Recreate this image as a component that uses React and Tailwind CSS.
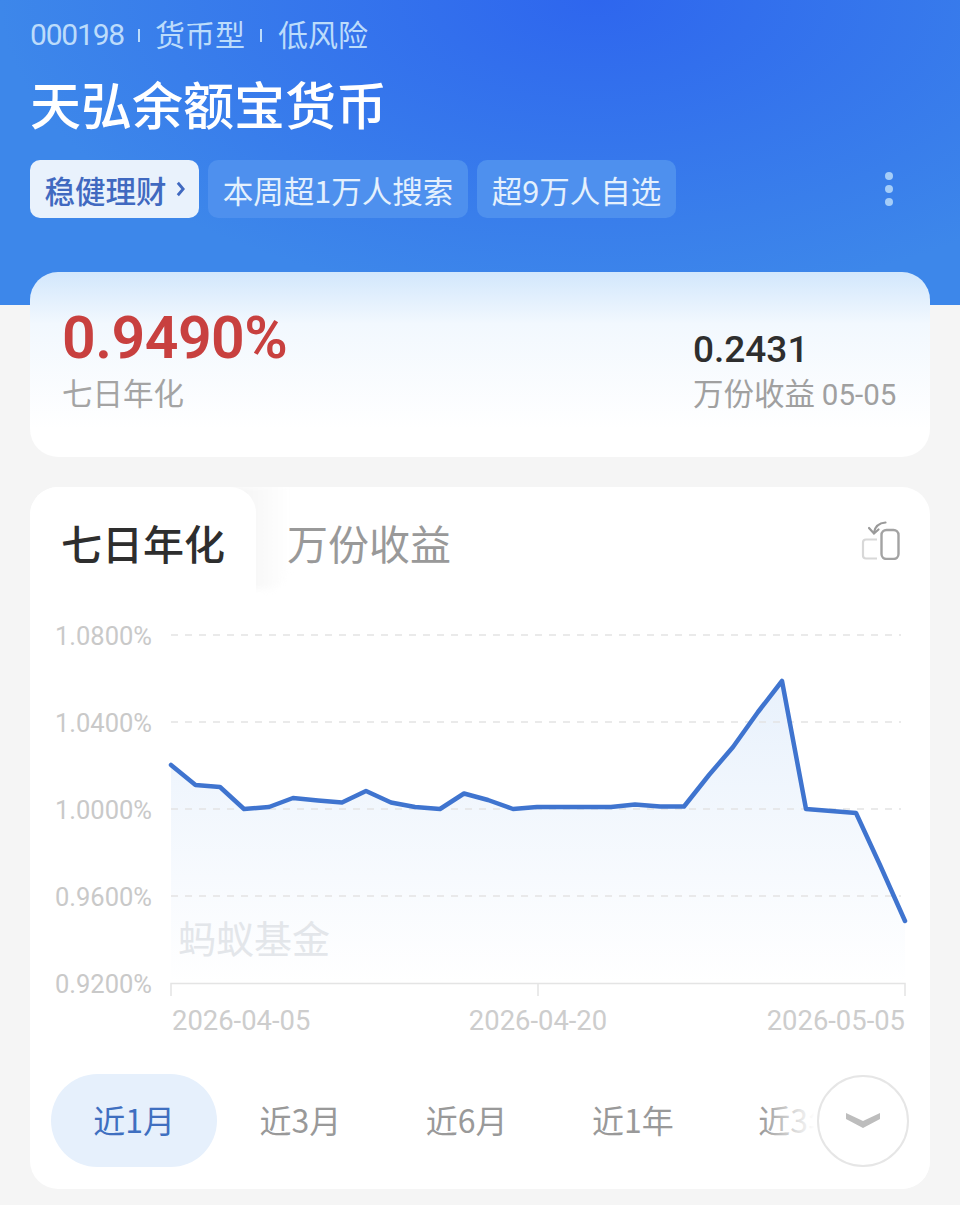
import { useState } from "react";

const cjk = "font-['Noto_Sans_CJK_SC','Noto_Sans',sans-serif]";
const ranges = ["近1月", "近3月", "近6月", "近1年", "近3年"];
const yLabels = [
  ["1.0800%", 635],
  ["1.0400%", 722],
  ["1.0000%", 809],
  ["0.9600%", 896],
  ["0.9200%", 983],
];
const xLabels = [
  ["2026-04-05", 172, "start"],
  ["2026-04-20", 538, "middle"],
  ["2026-05-05", 905, "end"],
];
const points = [
  [171, 765], [195.5, 785], [220, 787], [244, 809], [269, 807], [293, 798],
  [318, 800.5], [342, 802.5], [366, 791], [391, 802.5], [415, 807], [440, 809],
  [464, 793.5], [488, 800], [513, 809], [537, 807], [562, 807], [586, 807],
  [611, 807], [635, 804.5], [660, 806.5], [684, 806.5], [709, 775], [733, 747],
  [758, 712], [782, 681], [806, 809], [831, 811], [856, 813], [880, 865], [905, 921],
];
const linePath = points.map(([x, y]) => `${x},${y}`).join(" ");
const areaPath = `171,983 ${linePath} 905,983`;

const Chart = () => (
  <svg viewBox="0 610 960 440" className="absolute left-[-30px] top-[123px] h-[440px] w-[960px]">
    <defs>
      <linearGradient id="area" x1="0" y1="0" x2="0" y2="1">
        <stop offset="0" stopColor="#e8f1fc" />
        <stop offset="1" stopColor="#ffffff" />
      </linearGradient>
    </defs>
    <polygon points={areaPath} fill="url(#area)" />
    {yLabels.map(([label, y]) => (
      <g key={label}>
        {y !== 983 && <line x1="171" x2="901" y1={y} y2={y} stroke="#e4e4e4" strokeWidth="1.5" strokeDasharray="7 7" />}
        <text x="152" y={y + 10} textAnchor="end" fontSize="25.500" fill="#c9c9c9" fontFamily="Roboto, sans-serif">{label}</text>
      </g>
    ))}
    <path d="M171 996V983.5H905V996M538 983.5V996" fill="none" stroke="#e4e4e4" strokeWidth="1.5" />
    {xLabels.map(([label, x, anchor]) => (
      <text key={label} x={x} y="1030" textAnchor={anchor} fontSize="27.400" fill="#cdcdcd" fontFamily="Roboto, sans-serif">{label}</text>
    ))}
    <text x="178" y="953" fontSize="38" fill="#e3e6ea" fontFamily="'Noto Sans CJK SC', sans-serif">蚂蚁基金</text>
    <polyline points={linePath} fill="none" stroke="#3f74cf" strokeWidth="4.500" strokeLinejoin="round" strokeLinecap="round" />
  </svg>
);

const RotateIcon = () => (
  <svg viewBox="0 0 40 40" className="h-10 w-10" fill="none">
    <path d="M16 19.500H5a3 3 0 0 0-3 3v13a3 3 0 0 0 3 3h11" stroke="#d8d8d8" strokeWidth="2.200" />
    <rect x="20.500" y="10" width="17" height="29" rx="5" stroke="#a3a3a3" strokeWidth="2.400" />
    <path d="M24.500 2.500c-6 .5-10.500 4-11.500 10" stroke="#9a9a9a" strokeWidth="2.200" strokeLinecap="round" />
    <path d="M8 8l5 5.500 4.500-4" stroke="#9a9a9a" strokeWidth="2.200" strokeLinecap="round" />
  </svg>
);

export default function App() {
  const [active] = useState(0);

  return (
    <div className={`relative h-[1205px] w-[960px] overflow-hidden bg-[#f5f5f5] ${cjk}`}>
      <header className="h-[305px] bg-[radial-gradient(ellipse_62%_100%_at_62%_0%,#2e66ee_0%,#3d87ea_100%)] px-[30px] pt-[17px]">
        <div className="flex h-[36px] items-center text-[30px] leading-none text-[#bcdcfb]">
          <span className="font-['Roboto'] text-[30px] tracking-[-1.200px]">000198</span>
          <span className="ml-[14px] mr-[15px] h-[13px] w-[2px] bg-[#bcdcfb]" />
          <span className="mb-[4px]">货币型</span>
          <span className="ml-[15px] mr-[16px] h-[13px] w-[2px] bg-[#bcdcfb]" />
          <span className="mb-[4px]">低风险</span>
        </div>
        <h1 className="mt-[20px] text-[51px] font-medium leading-[60px] text-white">天弘余额宝货币</h1>
        <div className="mt-[27px] flex items-center gap-[9px]">
          <div className="flex h-[58px] w-[169px] items-center justify-center gap-[9px] rounded-[10px] bg-[#e9f2fc] pt-[3px] text-[30.500px] font-medium text-[#4069c0]">
            稳健理财
            <svg viewBox="0 0 10 18" className="mb-[3px] h-[16px] w-[9px]" fill="none">
              <path d="M2 2l6 7-6 7" stroke="#4069c0" strokeWidth="3.200" />
            </svg>
          </div>
          <div className="flex h-[58px] w-[260px] items-center justify-center rounded-[10px] bg-[#4e90ee] pt-[3px] text-[30.500px] text-[#e4f0fd]">本周超1万人搜索</div>
          <div className="flex h-[58px] w-[199px] items-center justify-center rounded-[10px] bg-[#4e90ee] pt-[3px] text-[30.500px] text-[#e4f0fd]">超9万人自选</div>
          <div className="ml-auto mr-[37px] flex flex-col gap-[5px]">
            <span className="h-2 w-2 rounded-full bg-[#a5cdf8]" />
            <span className="h-2 w-2 rounded-full bg-[#a5cdf8]" />
            <span className="h-2 w-2 rounded-full bg-[#a5cdf8]" />
          </div>
        </div>
      </header>

      <section className="mx-[30px] mt-[-33px] flex h-[185px] items-start justify-between rounded-[28px] bg-[linear-gradient(180deg,#d2e7fc_0%,#f2f8fe_28%,#ffffff_85%)] pl-[32px] pr-[32px] pt-[36px]">
        <div>
          <div className="font-['Roboto'] text-[59px] font-semibold leading-[60px] tracking-[-0.500px] text-[#c8403f]">0.9490%</div>
          <div className="mt-[4px] text-[30.500px] leading-[40px] text-[#a4a4a4]">七日年化</div>
        </div>
        <div className="mt-[20px] w-[205px]">
          <div className="font-['Roboto'] text-[37px] font-medium leading-[44px] text-[#2e2e2e]">0.2431</div>
          <div className="mt-[2px] text-[30.500px] leading-[36px] text-[#a0a0a0]">万份收益 <span className="font-['Roboto'] text-[29.500px]">05-05</span></div>
        </div>
      </section>

      <section className="relative mx-[30px] mt-[30px] h-[702px] overflow-hidden rounded-[28px] bg-white">
        <div className="absolute left-[196px] top-0 h-[102px] w-[64px] rounded-br-[24px] bg-gradient-to-r from-[#f2f2f2] to-white blur-[3px]" />
        <div className="relative flex h-[116px] items-start">
          <div className="flex h-[108px] w-[226px] items-start rounded-tr-[26px] bg-white pl-[31px] pt-[26px] text-[41px] font-medium leading-[58px] text-[#2e2e2e]">
            七日年化
          </div>
          <div className="ml-[31px] pt-[26px] text-[41px] leading-[58px] text-[#999999]">万份收益</div>
          <div className="ml-auto mr-[29px] mt-[33px]">
            <RotateIcon />
          </div>
        </div>

        <Chart />

        <div className="absolute bottom-[22px] left-[21px] flex items-center">
          {ranges.map((range, index) => (
            <div
              key={range}
              className={`flex h-[93px] w-[166.250px] items-center justify-center rounded-full pb-[4px] text-[32px] ${
                index === active ? "bg-[#e6f0fc] text-[#3f6fc0]" : "text-[#999999]"
              }`}
            >
              {range}
            </div>
          ))}
        </div>
        <div className="absolute bottom-0 right-0 h-[130px] w-[170px] bg-[linear-gradient(90deg,rgba(255,255,255,0)_0%,#ffffff_32%)]" />
        <div className="absolute bottom-[22px] right-[21px] flex h-[92px] w-[92px] items-center justify-center rounded-full border-2 border-[#e6e6e6] bg-white">
          <svg viewBox="0 0 34 18" className="mb-[2px] h-[18px] w-[34px]">
            <path d="M0 2l17 8 17-8v6l-17 9-17-9z" fill="#bdbdbd" />
          </svg>
        </div>
      </section>
    </div>
  );
}
